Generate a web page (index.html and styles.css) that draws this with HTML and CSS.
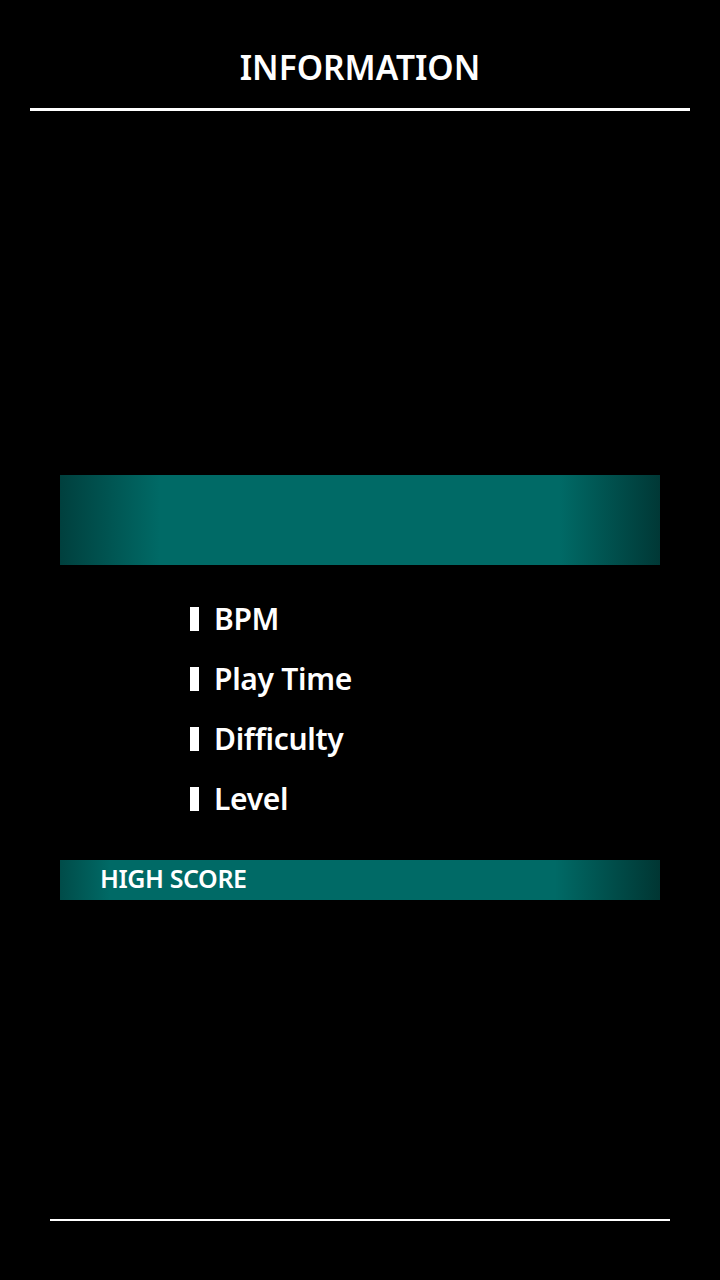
FILE: index.html
```html
<!DOCTYPE html>
<html>
<head>
<meta charset="utf-8">
<link rel="stylesheet" href="styles.css">
</head>
<body>
<div class="screen">
  <header class="header">
    <h1 class="title">INFORMATION</h1>
    <div class="title-rule"></div>
  </header>
  <section class="banner"></section>
  <ul class="info-list">
    <li class="info-item"><span class="bullet"></span><span class="label">BPM</span></li>
    <li class="info-item"><span class="bullet"></span><span class="label">Play Time</span></li>
    <li class="info-item"><span class="bullet"></span><span class="label">Difficulty</span></li>
    <li class="info-item"><span class="bullet"></span><span class="label">Level</span></li>
  </ul>
  <div class="score-bar"><span class="score-label">HIGH SCORE</span></div>
  <div class="spacer"></div>
  <div class="footer-rule"></div>
</div>
</body>
</html>
```
FILE: styles.css
```css
html, body {
  margin: 0;
  padding: 0;
  background: #000;
}
body {
  font-family: "Noto Sans", "Open Sans", sans-serif;
  color: #fff;
}
.screen {
  width: 720px;
  height: 1280px;
  display: flex;
  flex-direction: column;
}
.header {
  padding: 47px 30px 0;
}
.title {
  margin: 0;
  font-size: 33.5px;
  line-height: 40px;
  font-weight: 600;
  text-align: center;
  letter-spacing: 0;
}
.title-rule {
  margin-top: 21px;
  height: 3px;
  background: #fff;
}
.banner {
  margin: 364px 60px 0;
  height: 90px;
  background: linear-gradient(to right, #00403e 0, #006a66 100px, #006a66 calc(100% - 100px), #003836 100%);
}
.info-list {
  list-style: none;
  margin: 24px 0 0;
  padding: 0 0 0 190px;
}
.info-item {
  height: 60px;
  display: flex;
  align-items: center;
  gap: 15px;
}
.bullet {
  width: 9px;
  height: 24px;
  background: #fff;
  flex: none;
}
.label {
  font-size: 30px;
  line-height: 60px;
  font-weight: 600;
  letter-spacing: -0.3px;
}
.score-bar {
  box-sizing: border-box;
  margin: 31px 60px 0;
  height: 40px;
  display: flex;
  align-items: center;
  padding: 0 0 4px 40px;
  background: linear-gradient(to right, #004c49 0, #006a66 50px, #006a66 calc(100% - 105px), #003633 100%);
}
.score-label {
  font-size: 25px;
  line-height: 36px;
  font-weight: 600;
  letter-spacing: -0.4px;
}
.spacer {
  flex: 1;
}
.footer-rule {
  margin: 0 50px 59px;
  height: 2px;
  background: #fff;
}
```
